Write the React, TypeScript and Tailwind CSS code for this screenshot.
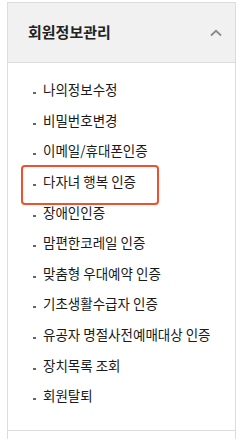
const items = [
  "나의정보수정",
  "비밀번호변경",
  "이메일/휴대폰인증",
  "다자녀 행복 인증",
  "장애인인증",
  "맘편한코레일 인증",
  "맞춤형 우대예약 인증",
  "기초생활수급자 인증",
  "유공자 명절사전예매대상 인증",
  "장치목록 조회",
  "회원탈퇴",
];

export default function App() {
  return (
    <div
      className="min-h-[439px] w-[242px] bg-white pt-[2px]"
      style={{ fontFamily: '"Noto Sans CJK KR", "Noto Sans", sans-serif' }}
    >
      <div className="ml-[7px] w-[229px] border-x border-t border-[#dcdcdc]">
        <div className="flex h-[60px] items-center justify-between border-b border-[#dcdcdc] bg-[#f1f1f1] pl-[20px] pr-[13px]">
          <span className="text-[15px] font-bold text-[#222]">회원정보관리</span>
          <svg width="12" height="8" viewBox="0 0 12 8" fill="none">
            <path d="M1 6.5 L6 1.8 L11 6.5" stroke="#8a8a8a" strokeWidth="1.8" />
          </svg>
        </div>
        <ul className="relative border-b border-[#dcdcdc] pb-[19px] pt-[11px]">
          {items.map((label) => (
            <li key={label} className="flex h-[30.6px] items-center pl-[25px]">
              <span className="mr-[7px] mt-[8px] h-[2px] w-[3px] bg-[#666]" />
              <span className="text-[13.5px] text-[#1a1a1a]">{label}</span>
            </li>
          ))}
          <div className="pointer-events-none absolute left-[13px] top-[102px] h-[40px] w-[138px] rounded-[4px] border-[2.5px] border-[#f0502d]" />
        </ul>
        <div className="h-[10px]" />
      </div>
    </div>
  );
}
